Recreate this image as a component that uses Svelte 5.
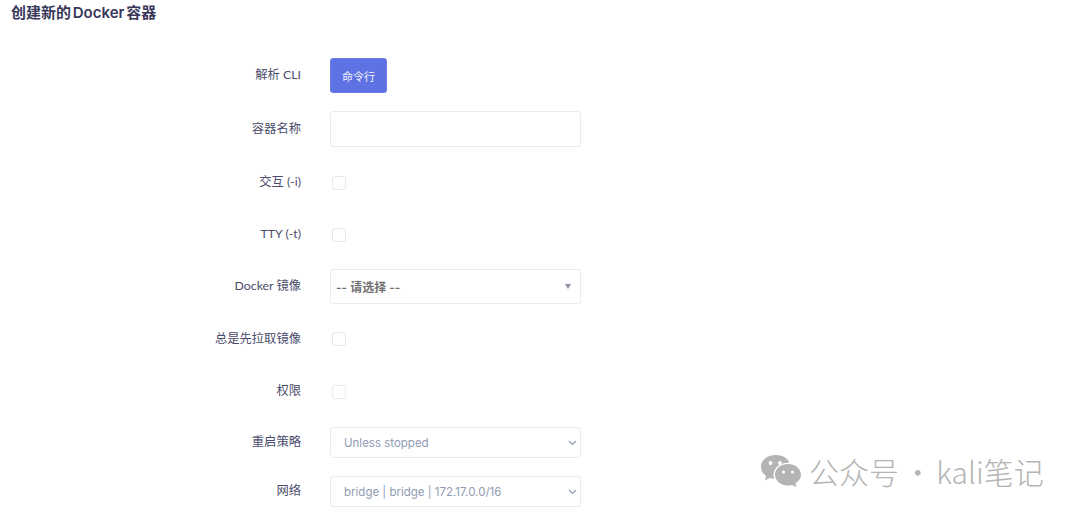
<script>
  const rows = [
    { label: '解析 CLI', type: 'button', h: 35 },
    { label: '容器名称', type: 'input', h: 36 },
    { label: '交互 (-i)', type: 'check', h: 35 },
    { label: 'TTY (-t)', type: 'check', h: 33 },
    { label: 'Docker 镜像', type: 'custom', h: 35 },
    { label: '总是先拉取镜像', type: 'check', h: 34 },
    { label: '权限', type: 'check', h: 35 },
    { label: '重启策略', type: 'select', value: 'Unless stopped', h: 31 },
    { label: '网络', type: 'select', value: 'bridge | bridge | 172.17.0.0/16', h: 31 }
  ];
</script>

<div class="page">
  <h1>创建新的 Docker 容器</h1>

  <form class="form">
    {#each rows as row}
      <div class="row" style="height: {row.h}px">
        <span class="label">{row.label}</span>
        {#if row.type === 'button'}
          <button type="button" class="btn">命令行</button>
        {:else if row.type === 'input'}
          <div class="field"></div>
        {:else if row.type === 'check'}
          <span class="check"></span>
        {:else if row.type === 'custom'}
          <div class="field custom">
            <span>-- 请选择 --</span>
            <i class="caret"></i>
          </div>
        {:else}
          <div class="field native">
            <span>{row.value}</span>
            <svg width="9" height="6" viewBox="0 0 9 6"><path d="M1 1l3.500 3.500L8 1" fill="none" stroke="#8f9bb3" stroke-width="1.200" /></svg>
          </div>
        {/if}
      </div>
    {/each}
  </form>

  <div class="mark">
    <svg width="42" height="34" viewBox="0 0 42 34">
      <path d="M15.5 1C7.5 1 1 6.3 1 12.8c0 3.7 2 6.9 5.2 9.1L4.8 26.5l5-2.6c1.4.4 2.9.7 4.5.8-.5-1.3-.7-2.6-.7-4 0-6.6 6.3-11.9 14-11.9.6 0 1.1 0 1.6.1C28.600 4.500 22.600 1 15.500 1z" fill="#b4b4b4" />
      <path d="M28 10c-7 0-13 4.700-13 10.800S21 31.500 28 31.500c1.500 0 2.900-.2 4.200-.6l4.300 2.400-1.100-4C38.800 27.400 41 24.300 41 20.800 41 14.700 35 10 28 10z" fill="#b4b4b4" />
      <circle cx="10.500" cy="9" r="1.900" fill="#fff" /><circle cx="20" cy="9" r="1.900" fill="#fff" />
      <circle cx="23.500" cy="18" r="1.600" fill="#fff" /><circle cx="32.500" cy="18" r="1.600" fill="#fff" />
    </svg>
    <span>公众号 · kali笔记</span>
  </div>
</div>

<style>
  :global(body) {
    margin: 0;
    background: #fff;
  }

  .page {
    position: relative;
    height: 515px;
    overflow: hidden;
    font-family: Inter, "Noto Sans CJK SC", sans-serif;
    color: #4c4b6b;
  }

  h1 {
    margin: 0;
    padding: 3px 0 0 11px;
    height: 58px;
    box-sizing: border-box;
    font-size: 15px;
    line-height: 20px;
    font-weight: 600;
    word-spacing: -2px;
    color: #38375a;
  }

  .form {
    display: flex;
    flex-direction: column;
    gap: 18px;
  }

  .row {
    display: flex;
    align-items: center;
    gap: 29px;
  }

  .label {
    width: 301px;
    text-align: right;
    font-family: Lato, "Noto Sans CJK SC", sans-serif;
    font-size: 12.3px;
    line-height: 16px;
    margin-top: -1px;
    flex-shrink: 0;
  }

  .btn {
    height: 35px;
    width: 57px;
    padding: 0;
    border: 1px solid #6a7ae8;
    border-radius: 3px;
    background: #5e72e4;
    color: #f2f3fd;
    font: inherit;
    font-size: 11px;
  }

  .field {
    width: 251px;
    height: 100%;
    box-sizing: border-box;
    border: 1px solid #e9ecef;
    border-radius: 3px;
    background: #fff;
    display: flex;
    align-items: center;
    justify-content: space-between;
    font-size: 12px;
  }

  .custom {
    padding: 0 9px 0 5px;
    color: #707070;
    font-weight: 600;
  }

  .caret {
    border: 3px solid transparent;
    border-top: 5px solid #8792a6;
    border-bottom: 0;
  }

  .native {
    padding: 0 3px 0 13px;
    color: #8f9bb3;
    font-size: 11.5px;
  }

  .check {
    width: 12px;
    height: 12px;
    margin-left: 2px;
    border: 1px solid #e6e8ec;
    border-radius: 3px;
  }

  .mark {
    position: absolute;
    left: 760px;
    top: 454px;
    display: flex;
    align-items: center;
    gap: 7px;
    font-size: 30px;
    line-height: 34px;
    word-spacing: -3px;
    font-family: "Noto Sans CJK SC", "Noto Sans", sans-serif;
    font-weight: 300;
    color: #b4b4b4;
    white-space: nowrap;
  }
</style>
